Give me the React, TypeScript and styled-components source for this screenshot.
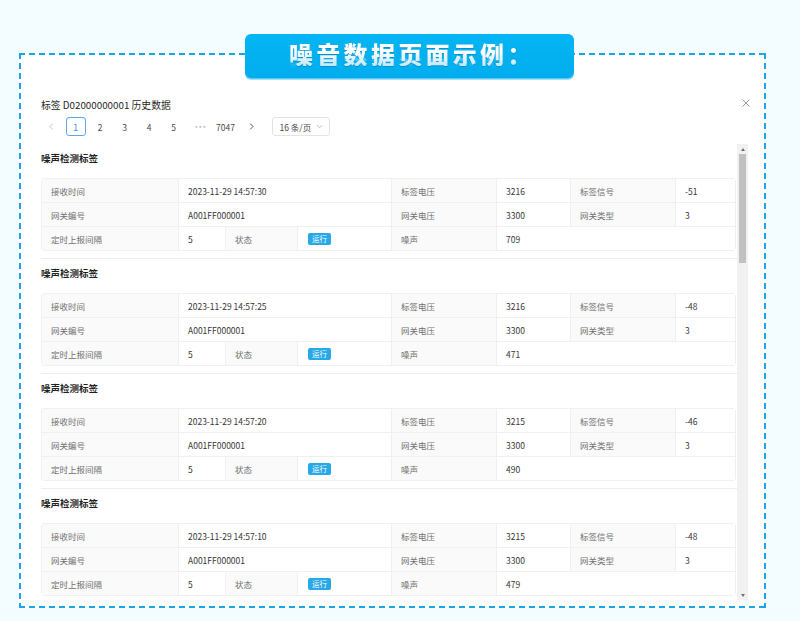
import React from 'react';
import styled, { createGlobalStyle } from 'styled-components';

const GlobalStyle = createGlobalStyle`
  html, body { margin: 0; padding: 0; background: #f3fcfe; }
  body {
    width: 800px; height: 621px; overflow: hidden;
    font-family: "Noto Sans CJK SC", "Noto Sans", sans-serif;
  }
  * { box-sizing: border-box; }
`;

const Page = styled.div`
  padding: 53px 0 0 19px;
`;

const dash = '#1ba4e6';

const Frame = styled.section`
  position: relative;
  width: 747px;
  height: 555px;
  padding: 44px 18px 8px 22px;
  display: flex;
  flex-direction: column;
  background:
    linear-gradient(90deg, ${dash} 0 6px, transparent 6px) 0 0 / 10px 2px repeat-x,
    linear-gradient(90deg, ${dash} 0 6px, transparent 6px) 0 100% / 10px 2px repeat-x,
    linear-gradient(180deg, ${dash} 0 6px, transparent 6px) 0 0 / 2px 10px repeat-y,
    linear-gradient(180deg, ${dash} 0 6px, transparent 6px) 100% 0 / 2px 10px repeat-y,
    #ffffff;
`;

const Banner = styled.div`
  position: absolute;
  left: 226px;
  top: -19px;
  width: 329px;
  height: 45px;
  border-radius: 6px;
  background: linear-gradient(180deg, #06b5f3 0%, #00adee 100%);
  box-shadow: inset 0 -1px 0 rgba(255, 255, 255, 0.35), 0 1px 0 #a6e1f6;
  padding: 8px 0 0 44px;
`;

const BannerText = styled.h1`
  margin: 0;
  font-size: 24px;
  line-height: 24px;
  font-weight: 900;
  letter-spacing: 3.3px;
  white-space: nowrap;
  color: transparent;
  background: linear-gradient(180deg, #ffffff 0%, #ffffff 40%, #bfe8f9 100%);
  -webkit-background-clip: text;
  background-clip: text;
  filter: drop-shadow(0 1px 0 rgba(0, 90, 150, 0.35));
  -webkit-box-reflect: below -8px linear-gradient(transparent 62%, rgba(255, 255, 255, 0.45));
`;

const Header = styled.div`
  height: 16px;
  display: flex;
  align-items: center;
  justify-content: space-between;
`;

const Title = styled.div`
  font-size: 9.8px;
  color: #262626;
  line-height: 16px;
`;

const Close = styled.span`
  display: flex;
  margin-right: -2px;
  margin-top: -5px;
  color: #8f8f8f;
`;

const Pager = styled.div`
  height: 19px;
  margin-top: 4px;
  display: flex;
  align-items: center;
  gap: 4.5px;
`;

const PageItem = styled.div<{ $active?: boolean; $w?: number }>`
  width: ${(p) => p.$w ?? 20}px;
  height: 19px;
  flex: none;
  display: flex;
  align-items: center;
  justify-content: center;
  font-size: 8.5px;
  color: ${(p) => (p.$active ? '#1b8ff0' : '#4a4a4a')};
  border: 1px solid ${(p) => (p.$active ? '#5aa8f2' : 'transparent')};
  border-radius: 3px;
`;

const Ellipsis = styled.span`
  color: #b5b5b5;
  font-size: 6px;
  letter-spacing: 0.5px;
  padding-left: 3px;
  font-family: "DejaVu Sans", sans-serif;
`;

const SizeSelect = styled.div`
  margin-left: 6px;
  width: 58px;
  height: 19px;
  border: 1px solid #e3e3e3;
  border-radius: 3px;
  display: flex;
  align-items: center;
  justify-content: space-between;
  padding: 0 6px 0 7px;
  font-size: 8.5px;
  color: #4a4a4a;
`;

const Body = styled.div`
  height: 456px;
  margin-top: 8px;
  display: flex;
`;

const List = styled.div`
  width: 696px;
  flex: none;
  overflow: hidden;
`;

const ScrollBar = styled.div`
  width: 11px;
  flex: none;
  display: flex;
  flex-direction: column;
  background: #f1f1f1;
`;

const ArrowBtn = styled.div<{ $down?: boolean }>`
  height: 10px;
  flex: none;
  display: flex;
  align-items: center;
  justify-content: center;
  &::before {
    content: '';
    border-left: 2.5px solid transparent;
    border-right: 2.5px solid transparent;
    ${(p) => (p.$down ? 'border-top: 3px solid #6e6e6e;' : 'border-bottom: 3px solid #6e6e6e;')}
  }
`;

const Track = styled.div`
  flex: 1;
  padding: 0 2px;
`;

const Thumb = styled.div`
  height: 109px;
  background: #c1c1c1;
`;

const Section = styled.div`
  padding: 8px 0 7px;
  border-bottom: 1px solid #eeeeee;
`;

const Heading = styled.div`
  font-size: 9.5px;
  line-height: 13px;
  font-weight: 700;
  color: #1f1f1f;
  margin-bottom: 13px;
`;

const Card = styled.div`
  display: grid;
  grid-template-columns: 136px 46px 71px 93px 104px 73px 104px 1fr;
  grid-auto-rows: 23px;
  gap: 1px;
  padding: 1px;
  margin-right: 1px;
  background: #f0f0f0;
  border-radius: 4px;
  overflow: hidden;
`;

const Cell = styled.div<{ $label?: boolean; $span?: number }>`
  grid-column: span ${(p) => p.$span ?? 1};
  display: flex;
  align-items: center;
  padding-left: 9px;
  font-size: 8.5px;
  white-space: nowrap;
  background: ${(p) => (p.$label ? '#fafafa' : '#ffffff')};
  color: ${(p) => (p.$label ? '#707070' : '#363636')};
`;

const Badge = styled.span`
  display: inline-flex;
  align-items: center;
  height: 12px;
  padding: 0 4px;
  margin-left: 1px;
  border-radius: 2px;
  background: #27a8e9;
  color: #ffffff;
  font-size: 7.5px;
`;

type Rec = { time: string; tv: number; sig: number; gv: number; noise: number };

const records: Rec[] = [
  { time: '2023-11-29 14:57:30', tv: 3216, sig: -51, gv: 3300, noise: 709 },
  { time: '2023-11-29 14:57:25', tv: 3216, sig: -48, gv: 3300, noise: 471 },
  { time: '2023-11-29 14:57:20', tv: 3215, sig: -46, gv: 3300, noise: 490 },
  { time: '2023-11-29 14:57:10', tv: 3215, sig: -48, gv: 3300, noise: 479 },
];

const Chevron = ({ dir, color }: { dir: 'left' | 'right' | 'down'; color: string }) => {
  if (dir === 'down') {
    return (
      <svg width="7" height="5" viewBox="0 0 7 5" fill="none">
        <path d="M0.8 1 L3.5 3.8 L6.2 1" stroke={color} strokeWidth="0.9" />
      </svg>
    );
  }
  return (
    <svg width="5" height="7" viewBox="0 0 5 7" fill="none">
      <path
        d={dir === 'left' ? 'M3.8 0.6 L1 3.5 L3.8 6.4' : 'M1.2 0.6 L4 3.5 L1.2 6.4'}
        stroke={color}
        strokeWidth="0.9"
      />
    </svg>
  );
};

const RecordCard = ({ r }: { r: Rec }) => (
  <Section>
    <Heading>噪声检测标签</Heading>
    <Card>
      <Cell $label>接收时间</Cell>
      <Cell $span={3}>{r.time}</Cell>
      <Cell $label>标签电压</Cell>
      <Cell>{r.tv}</Cell>
      <Cell $label>标签信号</Cell>
      <Cell>{r.sig}</Cell>

      <Cell $label>网关编号</Cell>
      <Cell $span={3}>A001FF000001</Cell>
      <Cell $label>网关电压</Cell>
      <Cell>{r.gv}</Cell>
      <Cell $label>网关类型</Cell>
      <Cell>3</Cell>

      <Cell $label>定时上报间隔</Cell>
      <Cell>5</Cell>
      <Cell $label>状态</Cell>
      <Cell>
        <Badge>运行</Badge>
      </Cell>
      <Cell $label>噪声</Cell>
      <Cell $span={3}>{r.noise}</Cell>
    </Card>
  </Section>
);

export default function App() {
  return (
    <>
      <GlobalStyle />
      <Page>
        <Frame>
          <Banner>
            <BannerText>噪音数据页面示例：</BannerText>
          </Banner>
          <Header>
            <Title>标签 D02000000001 历史数据</Title>
            <Close>
              <svg width="8" height="8" viewBox="0 0 8 8">
                <path d="M0.5 0.5 L7.5 7.5 M7.5 0.5 L0.5 7.5" stroke="currentColor" strokeWidth="0.9" />
              </svg>
            </Close>
          </Header>
          <Pager>
            <PageItem>
              <Chevron dir="left" color="#c2c2c2" />
            </PageItem>
            <PageItem $active>1</PageItem>
            <PageItem>2</PageItem>
            <PageItem>3</PageItem>
            <PageItem>4</PageItem>
            <PageItem>5</PageItem>
            <PageItem $w={22}>
              <Ellipsis>•••</Ellipsis>
            </PageItem>
            <PageItem $w={22}>7047</PageItem>
            <PageItem>
              <Chevron dir="right" color="#444444" />
            </PageItem>
            <SizeSelect>
              <span>16 条/页</span>
              <Chevron dir="down" color="#bdbdbd" />
            </SizeSelect>
          </Pager>
          <Body>
            <List>
              {records.map((r, i) => (
                <RecordCard key={i} r={r} />
              ))}
            </List>
            <ScrollBar>
              <ArrowBtn />
              <Track>
                <Thumb />
              </Track>
              <ArrowBtn $down />
            </ScrollBar>
          </Body>
        </Frame>
      </Page>
    </>
  );
}
